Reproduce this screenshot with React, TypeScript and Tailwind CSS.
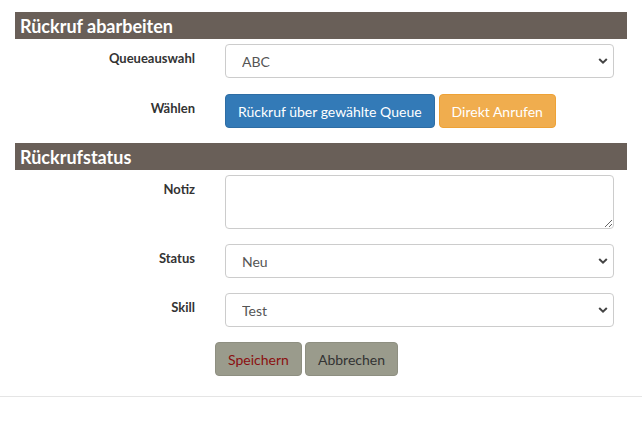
import React from 'react';

const font = { fontFamily: 'Lato, "Open Sans", sans-serif' };

function Chevron() {
  return (
    <svg width="10" height="7" viewBox="0 0 10 7" className="absolute right-[6px] top-1/2 -translate-y-1/2 pointer-events-none">
      <path d="M1.2 1.5 L5 5.2 L8.8 1.5" fill="none" stroke="#444" strokeWidth="2" />
    </svg>
  );
}

function SectionHeader({ title }: { title: string }) {
  return (
    <div className="h-[27px] bg-[#695f58] pl-[5px] flex items-center">
      <h2 className="text-[18px] font-bold text-white leading-none">{title}</h2>
    </div>
  );
}

function Row({ label, children }: { label: string; children: React.ReactNode }) {
  return (
    <div className="grid grid-cols-[180px_389px] gap-x-[30px]">
      <label className="text-right text-[13px] font-bold text-[#333] pt-[5px]">{label}</label>
      <div>{children}</div>
    </div>
  );
}

function FakeSelect({ value }: { value: string }) {
  return (
    <div className="relative">
      <select
        defaultValue={value}
        className="w-full h-[34px] appearance-none bg-white border border-[#ccc] rounded-[4px] pl-[16px] text-[14px] text-[#555] outline-none"
        style={font}
      >
        <option>{value}</option>
      </select>
      <Chevron />
    </div>
  );
}

export default function App() {
  return (
    <div className="min-h-[443px] bg-white" style={font}>
      <div className="pl-[15px] pr-[15px] pt-[12px]">
        <SectionHeader title="Rückruf abarbeiten" />

        <div className="mt-[5px] flex flex-col gap-[16px]">
          <Row label="Queueauswahl">
            <FakeSelect value="ABC" />
          </Row>
          <Row label="Wählen">
            <div className="flex gap-[4px]">
              <button className="h-[34px] px-[12px] rounded-[4px] bg-[#337ab7] border border-[#2e6da4] text-white text-[14px]">
                Rückruf über gewählte Queue
              </button>
              <button className="h-[34px] px-[12px] rounded-[4px] bg-[#f0ad4e] border border-[#eea236] text-white text-[14px]">
                Direkt Anrufen
              </button>
            </div>
          </Row>
        </div>

        <div className="mt-[15px]">
          <SectionHeader title="Rückrufstatus" />
        </div>

        <div className="mt-[5px] flex flex-col gap-[15px]">
          <Row label="Notiz">
            <textarea className="block w-full h-[54px] border border-[#ccc] rounded-[4px] bg-white outline-none" />
          </Row>
          <Row label="Status">
            <FakeSelect value="Neu" />
          </Row>
          <Row label="Skill">
            <FakeSelect value="Test" />
          </Row>
          <div className="flex gap-[3px] pl-[200px]">
            <button className="h-[34px] w-[87px] rounded-[4px] bg-[#9a9b8c] border border-[#8e8f81] text-[#8b1010] text-[14px]">
              Speichern
            </button>
            <button className="h-[34px] w-[93px] rounded-[4px] bg-[#9a9b8c] border border-[#8e8f81] text-[#333] text-[14px]">
              Abbrechen
            </button>
          </div>
        </div>
      </div>
      <div className="mt-[20px] border-t border-[#e5e5e5]" />
    </div>
  );
}
